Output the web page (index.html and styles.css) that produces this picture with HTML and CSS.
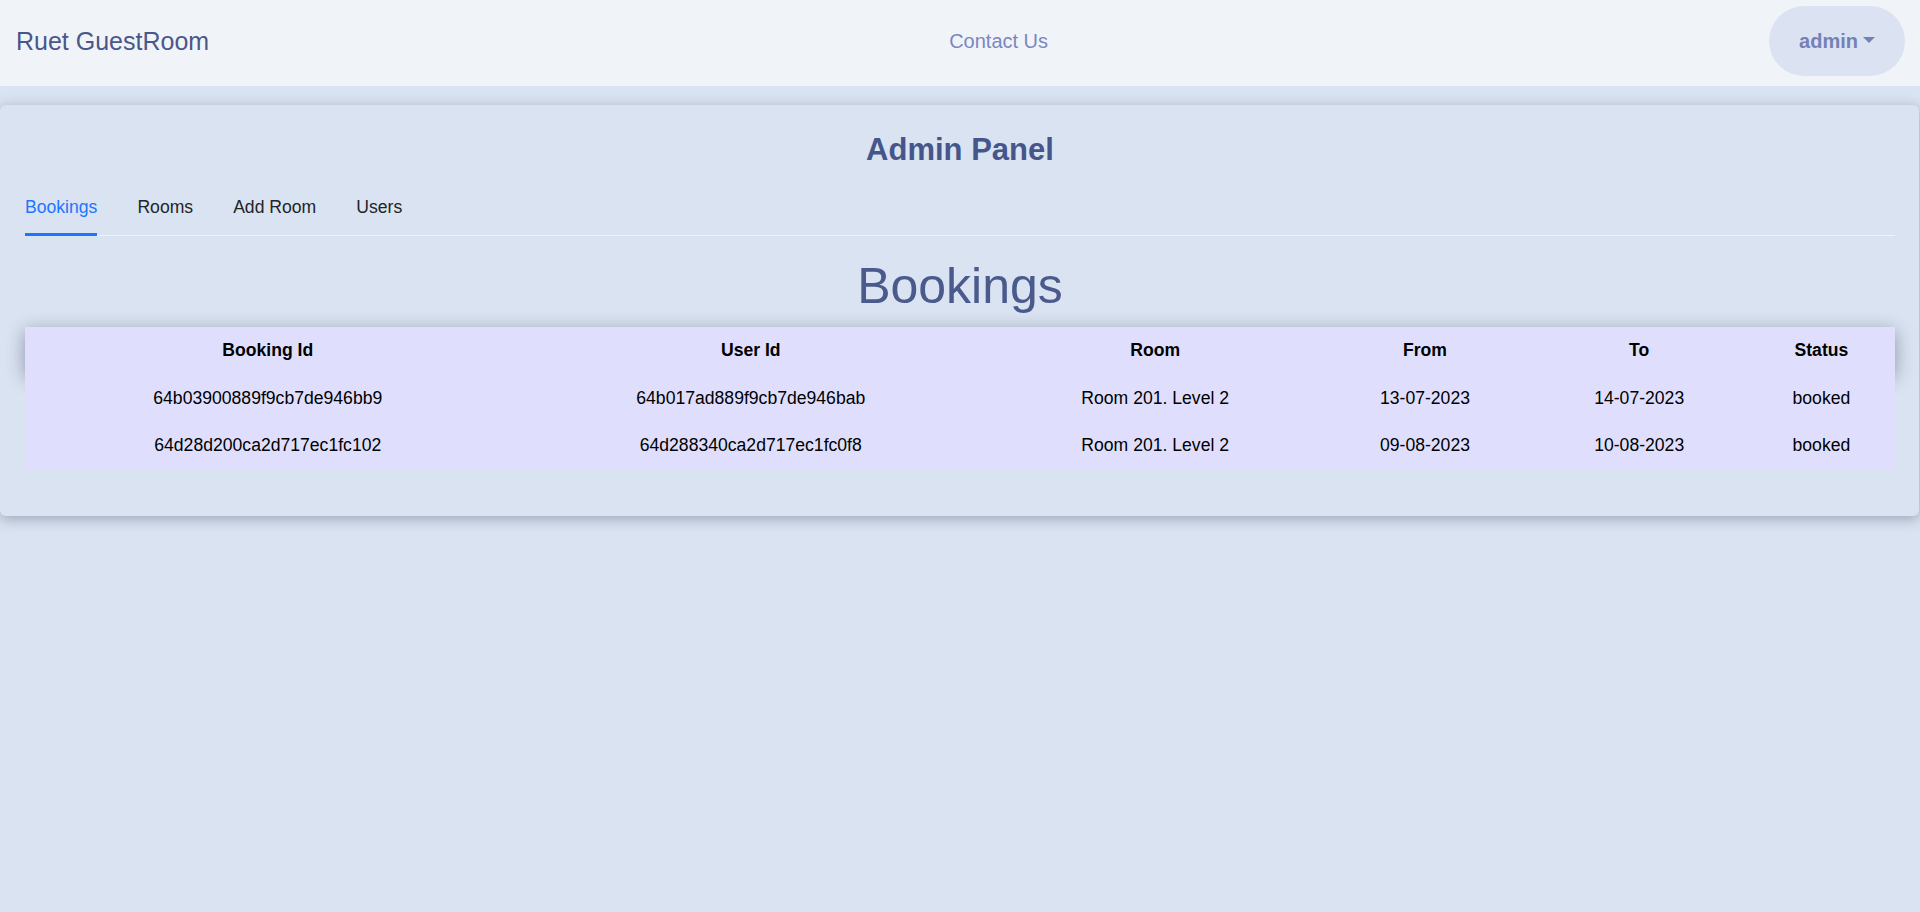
FILE: index.html
```html
<!DOCTYPE html>
<html lang="en">
<head>
<meta charset="utf-8">
<title>Ruet GuestRoom - Admin Panel</title>
<link rel="stylesheet" href="styles.css">
</head>
<body>
<nav class="navbar">
  <a class="brand" href="#">Ruet GuestRoom</a>
  <a class="nav-link" href="#">Contact Us</a>
  <button class="user-btn" type="button">admin<span class="caret"></span></button>
</nav>
<main class="panel">
  <h2 class="panel-title">Admin Panel</h2>
  <ul class="tabs">
    <li class="tab active">Bookings</li>
    <li class="tab">Rooms</li>
    <li class="tab">Add Room</li>
    <li class="tab">Users</li>
  </ul>
  <section class="tab-pane">
    <h1 class="section-title">Bookings</h1>
    <div class="table-wrap">
      <table class="bookings">
        <colgroup>
          <col class="col-booking">
          <col class="col-user">
          <col class="col-room">
          <col class="col-from">
          <col class="col-to">
          <col class="col-status">
        </colgroup>
        <thead>
          <tr><th>Booking Id</th><th>User Id</th><th>Room</th><th>From</th><th>To</th><th>Status</th></tr>
        </thead>
        <tbody>
          <tr><td>64b03900889f9cb7de946bb9</td><td>64b017ad889f9cb7de946bab</td><td>Room 201. Level 2</td><td>13-07-2023</td><td>14-07-2023</td><td>booked</td></tr>
          <tr><td>64d28d200ca2d717ec1fc102</td><td>64d288340ca2d717ec1fc0f8</td><td>Room 201. Level 2</td><td>09-08-2023</td><td>10-08-2023</td><td>booked</td></tr>
        </tbody>
      </table>
    </div>
  </section>
</main>
</body>
</html>
```

FILE: styles.css
```css
* { box-sizing: border-box; }

html, body {
  margin: 0;
  padding: 0;
}

body {
  background: #dae3f1;
  font-family: "Liberation Sans", Arial, sans-serif;
  color: #000;
  min-height: 912px;
}

a { text-decoration: none; }

.navbar {
  display: flex;
  align-items: center;
  justify-content: space-between;
  height: 86px;
  padding: 6px 15px 10px 16px;
  background: #f0f4f9;
}

.brand {
  font-size: 25px;
  line-height: 36px;
  color: #4a5789;
}

.nav-link {
  margin-left: 19px;
  font-size: 20px;
  line-height: 30px;
  color: #7a87bf;
}

.user-btn {
  display: flex;
  align-items: center;
  height: 70px;
  padding: 0 30px;
  border: none;
  border-radius: 35px;
  background: #dbe3f2;
  font-family: "Liberation Sans", Arial, sans-serif;
  font-size: 20px;
  font-weight: 700;
  line-height: 30px;
  color: #7480b6;
}

.caret {
  display: inline-block;
  width: 0;
  height: 0;
  margin-left: 5px;
  margin-top: -3px;
  border-top: 6px solid #7480b6;
  border-left: 6px solid transparent;
  border-right: 6px solid transparent;
}

.panel {
  margin: 19px 1px 0 0;
  padding: 25.6px 24px 26.5px 25px;
  background: #dae3f1;
  border-radius: 6px;
  box-shadow: 0 3px 14px rgba(40, 50, 80, 0.35);
}

.panel-title {
  margin: 0 0 16px;
  font-size: 31px;
  line-height: 37.2px;
  font-weight: 700;
  text-align: center;
  color: #46558a;
}

.tabs {
  display: flex;
  gap: 40px;
  margin: 0;
  padding: 0;
  list-style: none;
  border-bottom: 1px solid #eef2f9;
}

.tab {
  padding: 10px 0 12.8px;
  margin-bottom: -1px;
  font-size: 17.6px;
  line-height: 26.4px;
  color: #212529;
  border-bottom: 3px solid transparent;
  cursor: pointer;
}

.tab.active {
  color: #1f75fe;
  border-bottom-color: #1f75fe;
}

.section-title {
  margin: 20px 0 10.7px;
  font-size: 50px;
  line-height: 60px;
  font-weight: 400;
  text-align: center;
  color: #4a5a8c;
}

.table-wrap {
  position: relative;
  margin-bottom: 20px;
}

.table-wrap::before {
  content: "";
  position: absolute;
  left: 0;
  right: 0;
  top: 0;
  height: 47.6px;
  box-shadow: 0 4px 18px rgba(30, 40, 70, 0.42);
}

.bookings {
  position: relative;
  width: 100%;
  border-collapse: collapse;
  background: #dfdffd;
}

.col-booking { width: 485px; }
.col-user { width: 480px; }
.col-room { width: 328px; }
.col-from { width: 211px; }
.col-to { width: 217px; }
.col-status { width: 147px; }

.bookings th,
.bookings td {
  padding: 10.6px 8.8px;
  font-size: 17.6px;
  line-height: 26.4px;
  text-align: center;
  color: #000;
  border: none;
}

.bookings th {
  font-weight: 700;
}
```
